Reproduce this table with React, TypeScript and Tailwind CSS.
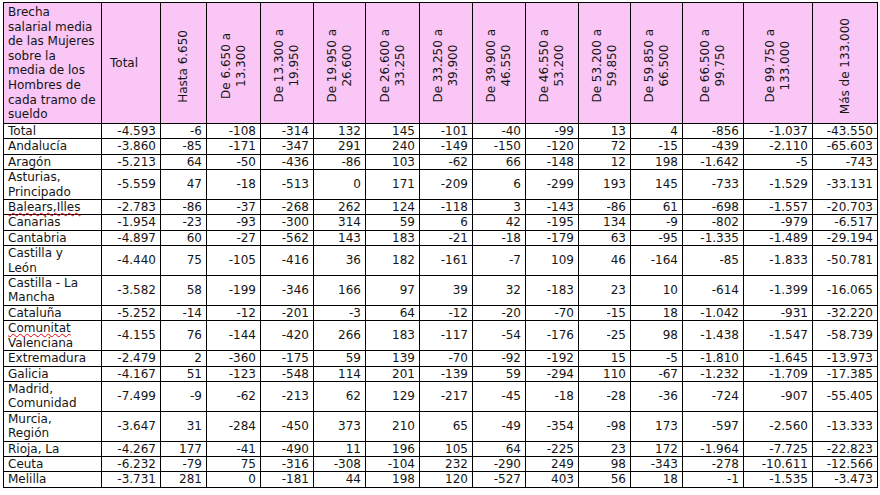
import React from 'react';

type Row = { label: React.ReactNode; values: string[] };

const headers: string[][] = [
  ['Hasta 6.650'],
  ['De 6.650 a', '13.300'],
  ['De 13.300 a', '19.950'],
  ['De 19.950 a', '26.600'],
  ['De 26.600 a', '33.250'],
  ['De 33.250 a', '39.900'],
  ['De 39.900 a', '46.550'],
  ['De 46.550 a', '53.200'],
  ['De 53.200 a', '59.850'],
  ['De 59.850 a', '66.500'],
  ['De 66.500 a', '99.750'],
  ['De 99.750 a', '133.000'],
  ['Más de 133.000'],
];

const colWidths = [98, 59, 46, 54, 53, 52, 54, 53, 53, 53, 52, 52, 61, 69, 65];

// spell-check style red squiggle seen under some region names
const squiggle = (text: string) => (
  <span className="underline decoration-wavy decoration-red-600 decoration-1 underline-offset-1">
    {text}
  </span>
);

const rows: Row[] = [
  { label: 'Total', values: ['-4.593', '-6', '-108', '-314', '132', '145', '-101', '-40', '-99', '13', '4', '-856', '-1.037', '-43.550'] },
  { label: 'Andalucía', values: ['-3.860', '-85', '-171', '-347', '291', '240', '-149', '-150', '-120', '72', '-15', '-439', '-2.110', '-65.603'] },
  { label: 'Aragón', values: ['-5.213', '64', '-50', '-436', '-86', '103', '-62', '66', '-148', '12', '198', '-1.642', '-5', '-743'] },
  { label: <>Asturias,<br />Principado</>, values: ['-5.559', '47', '-18', '-513', '0', '171', '-209', '6', '-299', '193', '145', '-733', '-1.529', '-33.131'] },
  { label: squiggle('Balears,Illes'), values: ['-2.783', '-86', '-37', '-268', '262', '124', '-118', '3', '-143', '-86', '61', '-698', '-1.557', '-20.703'] },
  { label: 'Canarias', values: ['-1.954', '-23', '-93', '-300', '314', '59', '6', '42', '-195', '134', '-9', '-802', '-979', '-6.517'] },
  { label: 'Cantabria', values: ['-4.897', '60', '-27', '-562', '143', '183', '-21', '-18', '-179', '63', '-95', '-1.335', '-1.489', '-29.194'] },
  { label: <>Castilla y<br />León</>, values: ['-4.440', '75', '-105', '-416', '36', '182', '-161', '-7', '109', '46', '-164', '-85', '-1.833', '-50.781'] },
  { label: <>Castilla - La<br />Mancha</>, values: ['-3.582', '58', '-199', '-346', '166', '97', '39', '32', '-183', '23', '10', '-614', '-1.399', '-16.065'] },
  { label: 'Cataluña', values: ['-5.252', '-14', '-12', '-201', '-3', '64', '-12', '-20', '-70', '-15', '18', '-1.042', '-931', '-32.220'] },
  { label: <>{squiggle('Comunitat')}<br />Valenciana</>, values: ['-4.155', '76', '-144', '-420', '266', '183', '-117', '-54', '-176', '-25', '98', '-1.438', '-1.547', '-58.739'] },
  { label: 'Extremadura', values: ['-2.479', '2', '-360', '-175', '59', '139', '-70', '-92', '-192', '15', '-5', '-1.810', '-1.645', '-13.973'] },
  { label: 'Galicia', values: ['-4.167', '51', '-123', '-548', '114', '201', '-139', '59', '-294', '110', '-67', '-1.232', '-1.709', '-17.385'] },
  { label: <>Madrid,<br />Comunidad</>, values: ['-7.499', '-9', '-62', '-213', '62', '129', '-217', '-45', '-18', '-28', '-36', '-724', '-907', '-55.405'] },
  { label: <>Murcia,<br />Región</>, values: ['-3.647', '31', '-284', '-450', '373', '210', '65', '-49', '-354', '-98', '173', '-597', '-2.560', '-13.333'] },
  { label: 'Rioja, La', values: ['-4.267', '177', '-41', '-490', '11', '196', '105', '64', '-225', '23', '172', '-1.964', '-7.725', '-22.823'] },
  { label: 'Ceuta', values: ['-6.232', '-79', '75', '-316', '-308', '-104', '232', '-290', '249', '98', '-343', '-278', '-10.611', '-12.566'] },
  { label: 'Melilla', values: ['-3.731', '281', '0', '-181', '44', '198', '120', '-527', '403', '56', '18', '-1', '-1.535', '-3.473'] },
];

export default function App() {
  return (
    <div className="min-h-[495px] w-[880px] bg-white pl-[3px] pt-[2px] font-['DejaVu_Sans',Verdana,sans-serif] text-[12px] text-[#151515]">
      <table className="w-[874px] table-fixed border-collapse">
        <colgroup>
          {colWidths.map((w, i) => (
            <col key={i} style={{ width: w }} />
          ))}
        </colgroup>
        <thead>
          <tr className="bg-[#f9c6f6]">
            <th className="h-[121px] whitespace-nowrap border border-black px-[4px] pt-[2px] text-left align-top font-normal leading-[14.6px]">
              Brecha
              <br />
              salarial media
              <br />
              de las Mujeres
              <br />
              sobre la
              <br />
              media de los
              <br />
              Hombres de
              <br />
              cada tramo de
              <br />
              sueldo
            </th>
            <th className="border border-black pl-[8px] text-left align-middle font-normal">Total</th>
            {headers.map((lines, i) => (
              <th key={i} className="border border-black p-0 align-middle font-normal">
                <div className="flex h-[119px] items-center justify-center pt-[6px]">
                  <span className="rotate-180 whitespace-nowrap text-center leading-[15px] [writing-mode:vertical-rl]">
                    {lines.map((l, j) => (
                      <React.Fragment key={j}>
                        {j > 0 && <br />}
                        {l}
                      </React.Fragment>
                    ))}
                  </span>
                </div>
              </th>
            ))}
          </tr>
        </thead>
        <tbody>
          {rows.map((row, r) => (
            <tr key={r}>
              <td className="whitespace-nowrap border border-black px-[4px] align-middle leading-[14.4px]">
                {row.label}
              </td>
              {row.values.map((v, c) => (
                <td key={c} className="border border-black pr-[4px] text-right align-middle leading-[14.4px]">
                  {v}
                </td>
              ))}
            </tr>
          ))}
        </tbody>
      </table>
    </div>
  );
}
